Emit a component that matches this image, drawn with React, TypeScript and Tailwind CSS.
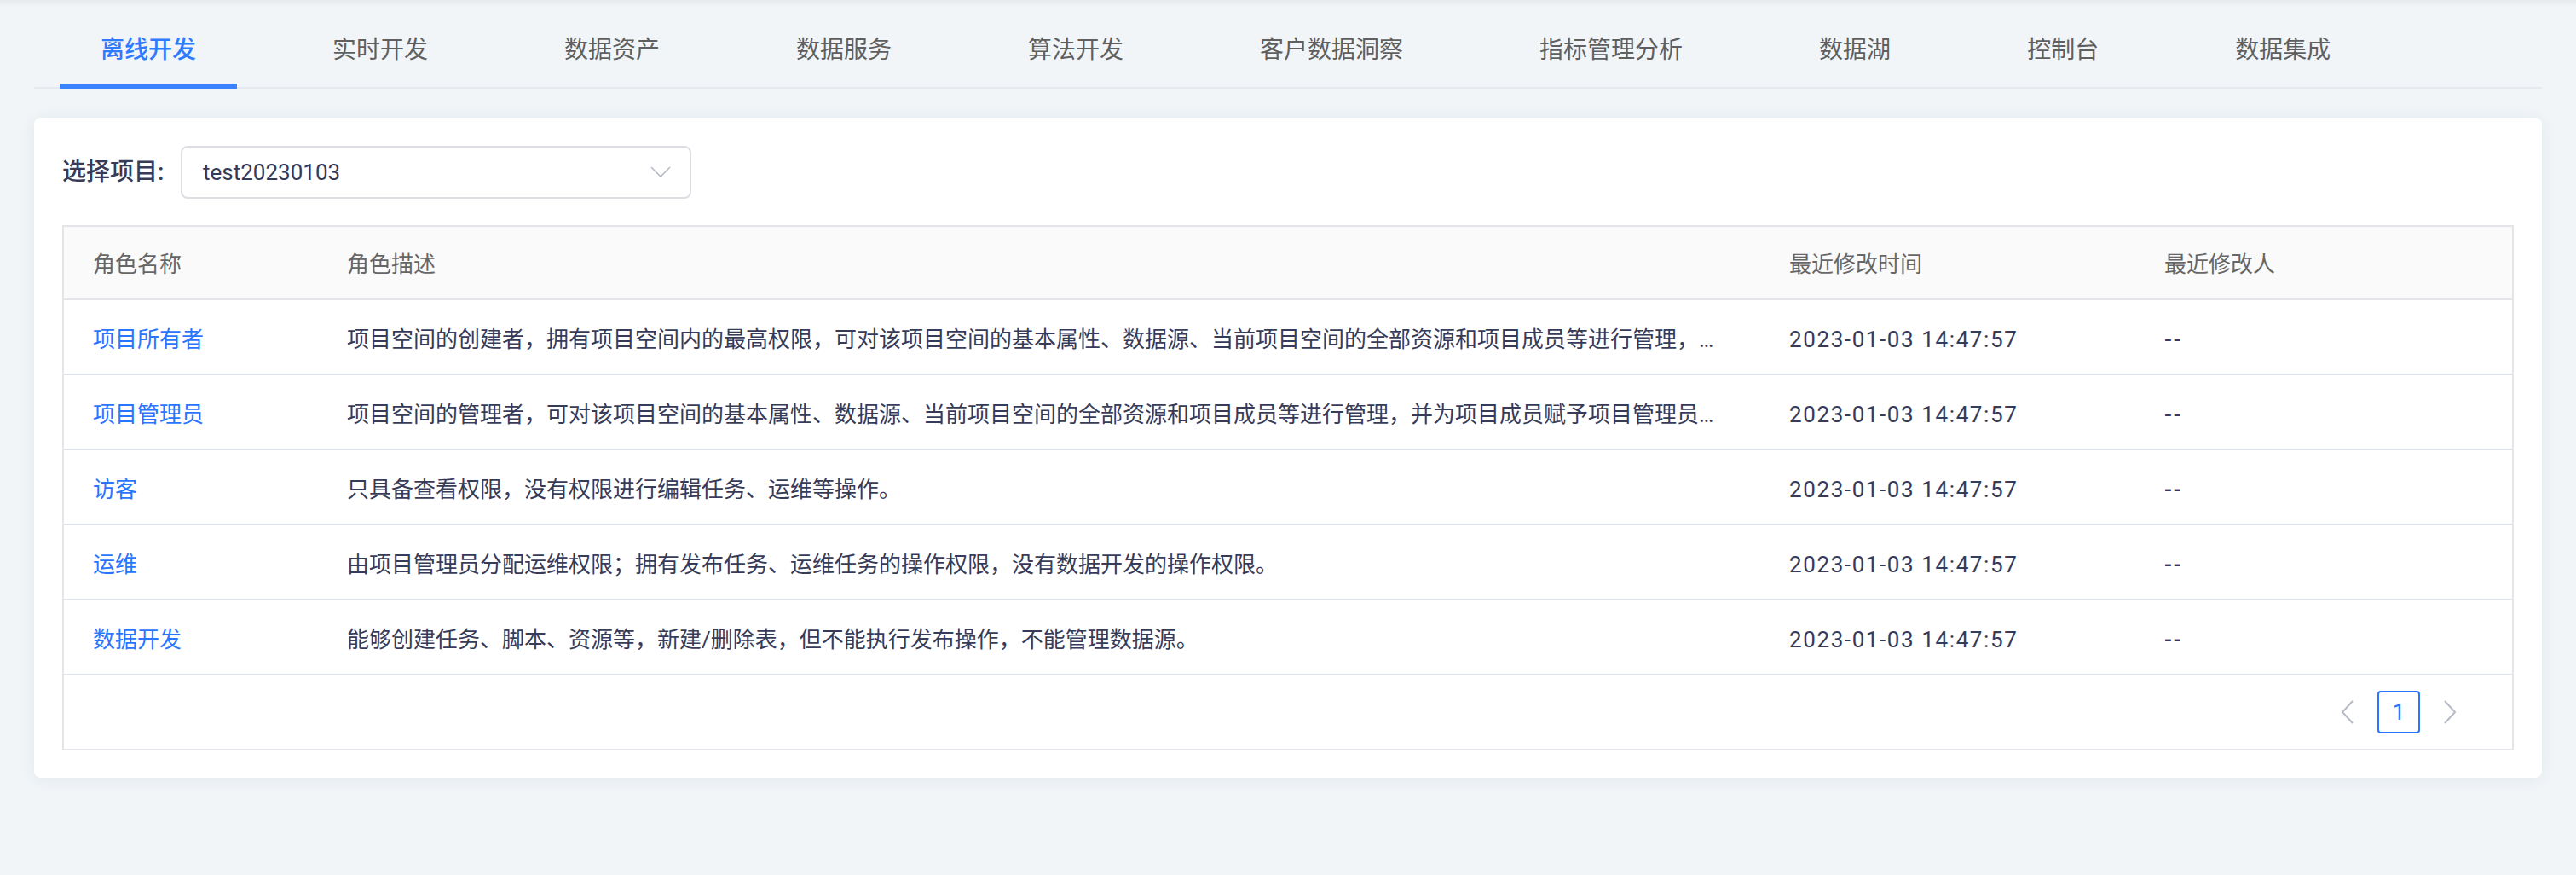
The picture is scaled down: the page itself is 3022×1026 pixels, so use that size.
import React from "react";

const tabs = [
  "离线开发",
  "实时开发",
  "数据资产",
  "数据服务",
  "算法开发",
  "客户数据洞察",
  "指标管理分析",
  "数据湖",
  "控制台",
  "数据集成",
];

const rows = [
  {
    name: "项目所有者",
    desc: "项目空间的创建者，拥有项目空间内的最高权限，可对该项目空间的基本属性、数据源、当前项目空间的全部资源和项目成员等进行管理，并为项目成员赋予项目管理员、数据开发、运维、访客角色。",
  },
  {
    name: "项目管理员",
    desc: "项目空间的管理者，可对该项目空间的基本属性、数据源、当前项目空间的全部资源和项目成员等进行管理，并为项目成员赋予项目管理员、数据开发、运维、访客角色。",
  },
  { name: "访客", desc: "只具备查看权限，没有权限进行编辑任务、运维等操作。" },
  { name: "运维", desc: "由项目管理员分配运维权限；拥有发布任务、运维任务的操作权限，没有数据开发的操作权限。" },
  { name: "数据开发", desc: "能够创建任务、脚本、资源等，新建/删除表，但不能执行发布操作，不能管理数据源。" },
];

const font = "font-['Roboto','Noto_Sans_CJK_SC',sans-serif]";

function Chevron({ dir }: { dir: "left" | "right" }) {
  return (
    <svg width="16" height="28" viewBox="0 0 16 28" fill="none">
      <polyline
        points={dir === "left" ? "14,1 2,14 14,27" : "2,1 14,14 2,27"}
        stroke="#b6b9c6"
        strokeWidth="2"
      />
    </svg>
  );
}

export default function App() {
  return (
    <div className={`${font} h-[1026px] bg-[#f1f5f8] px-[40px] shadow-[inset_0_10px_10px_-8px_rgba(0,0,0,0.07)]`}>
      {/* top tabs */}
      <div className="flex gap-[64px] border-b-2 border-[#e6eaee] pl-[30px] pt-[16px]">
        {tabs.map((t, i) => (
          <div
            key={t}
            className={
              "relative flex h-[86px] items-center px-[48px] text-[28px] " +
              (i === 0 ? "font-medium text-[#2f7bff]" : "text-[#5f5f5f]")
            }
          >
            {t}
            {i === 0 && <span className="absolute -bottom-[2px] left-0 right-0 h-[6px] bg-[#3a84ff]" />}
          </div>
        ))}
      </div>

      {/* card */}
      <div className="mt-[34px] rounded-[8px] bg-white px-[33px] pb-[32px] pt-[33px] shadow-[0_2px_18px_rgba(30,50,80,0.07)]">
        <div className="flex items-center">
          <span className="w-[139px] text-[28px] font-medium text-[#363b58]">选择项目:</span>
          <div className="flex h-[62px] w-[599px] items-center justify-between rounded-[8px] border-2 border-[#dcdee4] pl-[24px] pr-[22px]">
            <span className="text-[26px] text-[#343a5a]">test20230103</span>
            <svg width="24" height="14" viewBox="0 0 24 14" fill="none">
              <polyline points="1,1 12,12 23,1" stroke="#b8bcc8" strokeWidth="1.6" />
            </svg>
          </div>
        </div>

        <div className="mt-[31px] border-2 border-[#e3e5e9]">
          <div className="grid h-[86px] grid-cols-[298px_1692px_440px_1fr] items-center border-b-2 border-[#e3e5e9] bg-[#fafafa] pt-[4px] text-[26px] text-[#666666]">
            <div className="pl-[34px]">角色名称</div>
            <div className="pl-[34px]">角色描述</div>
            <div className="pl-[34px]">最近修改时间</div>
            <div className="pl-[34px]">最近修改人</div>
          </div>
          {rows.map((r) => (
            <div
              key={r.name}
              className="grid h-[88px] grid-cols-[298px_1692px_440px_1fr] items-center border-b-2 border-[#dfe2e7] pt-[6px] text-[26px] text-[#363b5a]"
            >
              <div className="pl-[34px] text-[#2a75ff]">{r.name}</div>
              <div className="truncate pl-[34px] pr-[40px]">{r.desc}</div>
              <div className="pl-[34px] tracking-[1.6px]">2023-01-03 14:47:57</div>
              <div className="pl-[34px] font-medium tracking-[2px]">--</div>
            </div>
          ))}
          <div className="flex h-[86px] items-center justify-end gap-[10px] pr-[48px]">
            <div className="flex h-[50px] w-[50px] items-center justify-center">
              <Chevron dir="left" />
            </div>
            <div className="flex h-[50px] w-[50px] items-center justify-center rounded-[4px] border-2 border-[#2a75ff] text-[26px] text-[#2a75ff]">
              1
            </div>
            <div className="flex h-[50px] w-[50px] items-center justify-center">
              <Chevron dir="right" />
            </div>
          </div>
        </div>
      </div>
    </div>
  );
}
